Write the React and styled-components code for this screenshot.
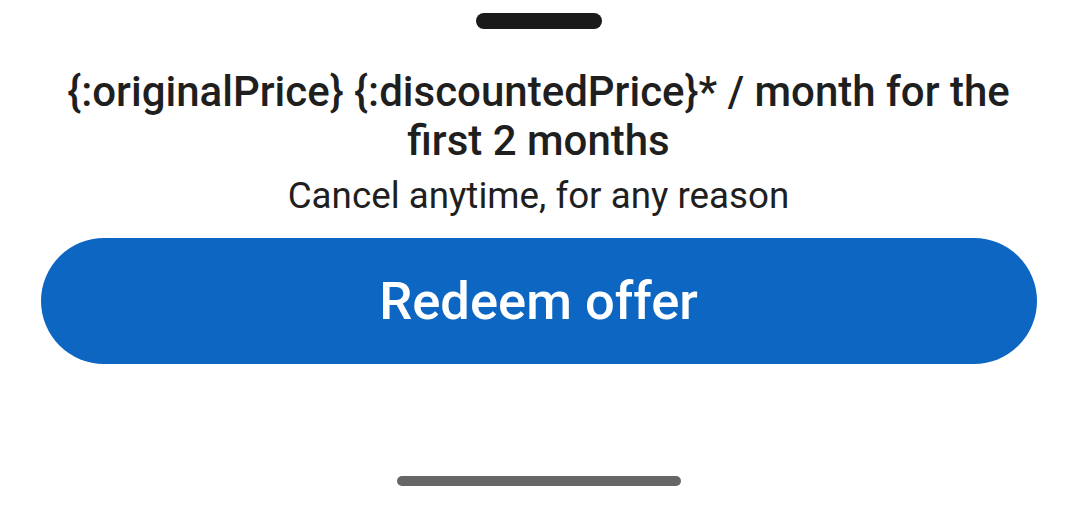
import React from "react";
import styled, { createGlobalStyle } from "styled-components";

const Global = createGlobalStyle`
  html, body {
    margin: 0;
    padding: 0;
    background: #ffffff;
  }
  body {
    font-family: Roboto, "Noto Sans", sans-serif;
  }
`;

const Sheet = styled.div`
  width: 1077px;
  height: 512px;
  display: flex;
  flex-direction: column;
  align-items: center;
  background: #ffffff;
  box-sizing: border-box;
  padding-top: 13px;
`;

const Handle = styled.div`
  width: 126px;
  height: 16px;
  border-radius: 8px;
  background: #1a1a1a;
`;

const Title = styled.h2`
  margin: 38px 0 0;
  width: 996px;
  text-align: center;
  font-size: 42px;
  line-height: 49px;
  font-weight: 500;
  color: #1f1f1f;
`;

const Subtitle = styled.p`
  margin: 9px 0 0;
  font-size: 36.75px;
  line-height: 44px;
  font-weight: 400;
  color: #1f1f1f;
`;

const RedeemButton = styled.button`
  margin-top: 20px;
  width: 996px;
  height: 126px;
  border: none;
  border-radius: 63px;
  background: #0c66c2;
  color: #ffffff;
  font-family: Roboto, "Noto Sans", sans-serif;
  font-size: 52.5px;
  font-weight: 500;
  cursor: pointer;
`;

const HomeBar = styled.div`
  margin-top: auto;
  margin-bottom: 26px;
  width: 284px;
  height: 10px;
  border-radius: 5px;
  background: #666666;
`;

export default function App() {
  return (
    <>
      <Global />
      <Sheet>
        <Handle />
        <Title>
          {"{:originalPrice} {:discountedPrice}* / month for the first 2 months"}
        </Title>
        <Subtitle>Cancel anytime, for any reason</Subtitle>
        <RedeemButton>Redeem offer</RedeemButton>
        <HomeBar />
      </Sheet>
    </>
  );
}
